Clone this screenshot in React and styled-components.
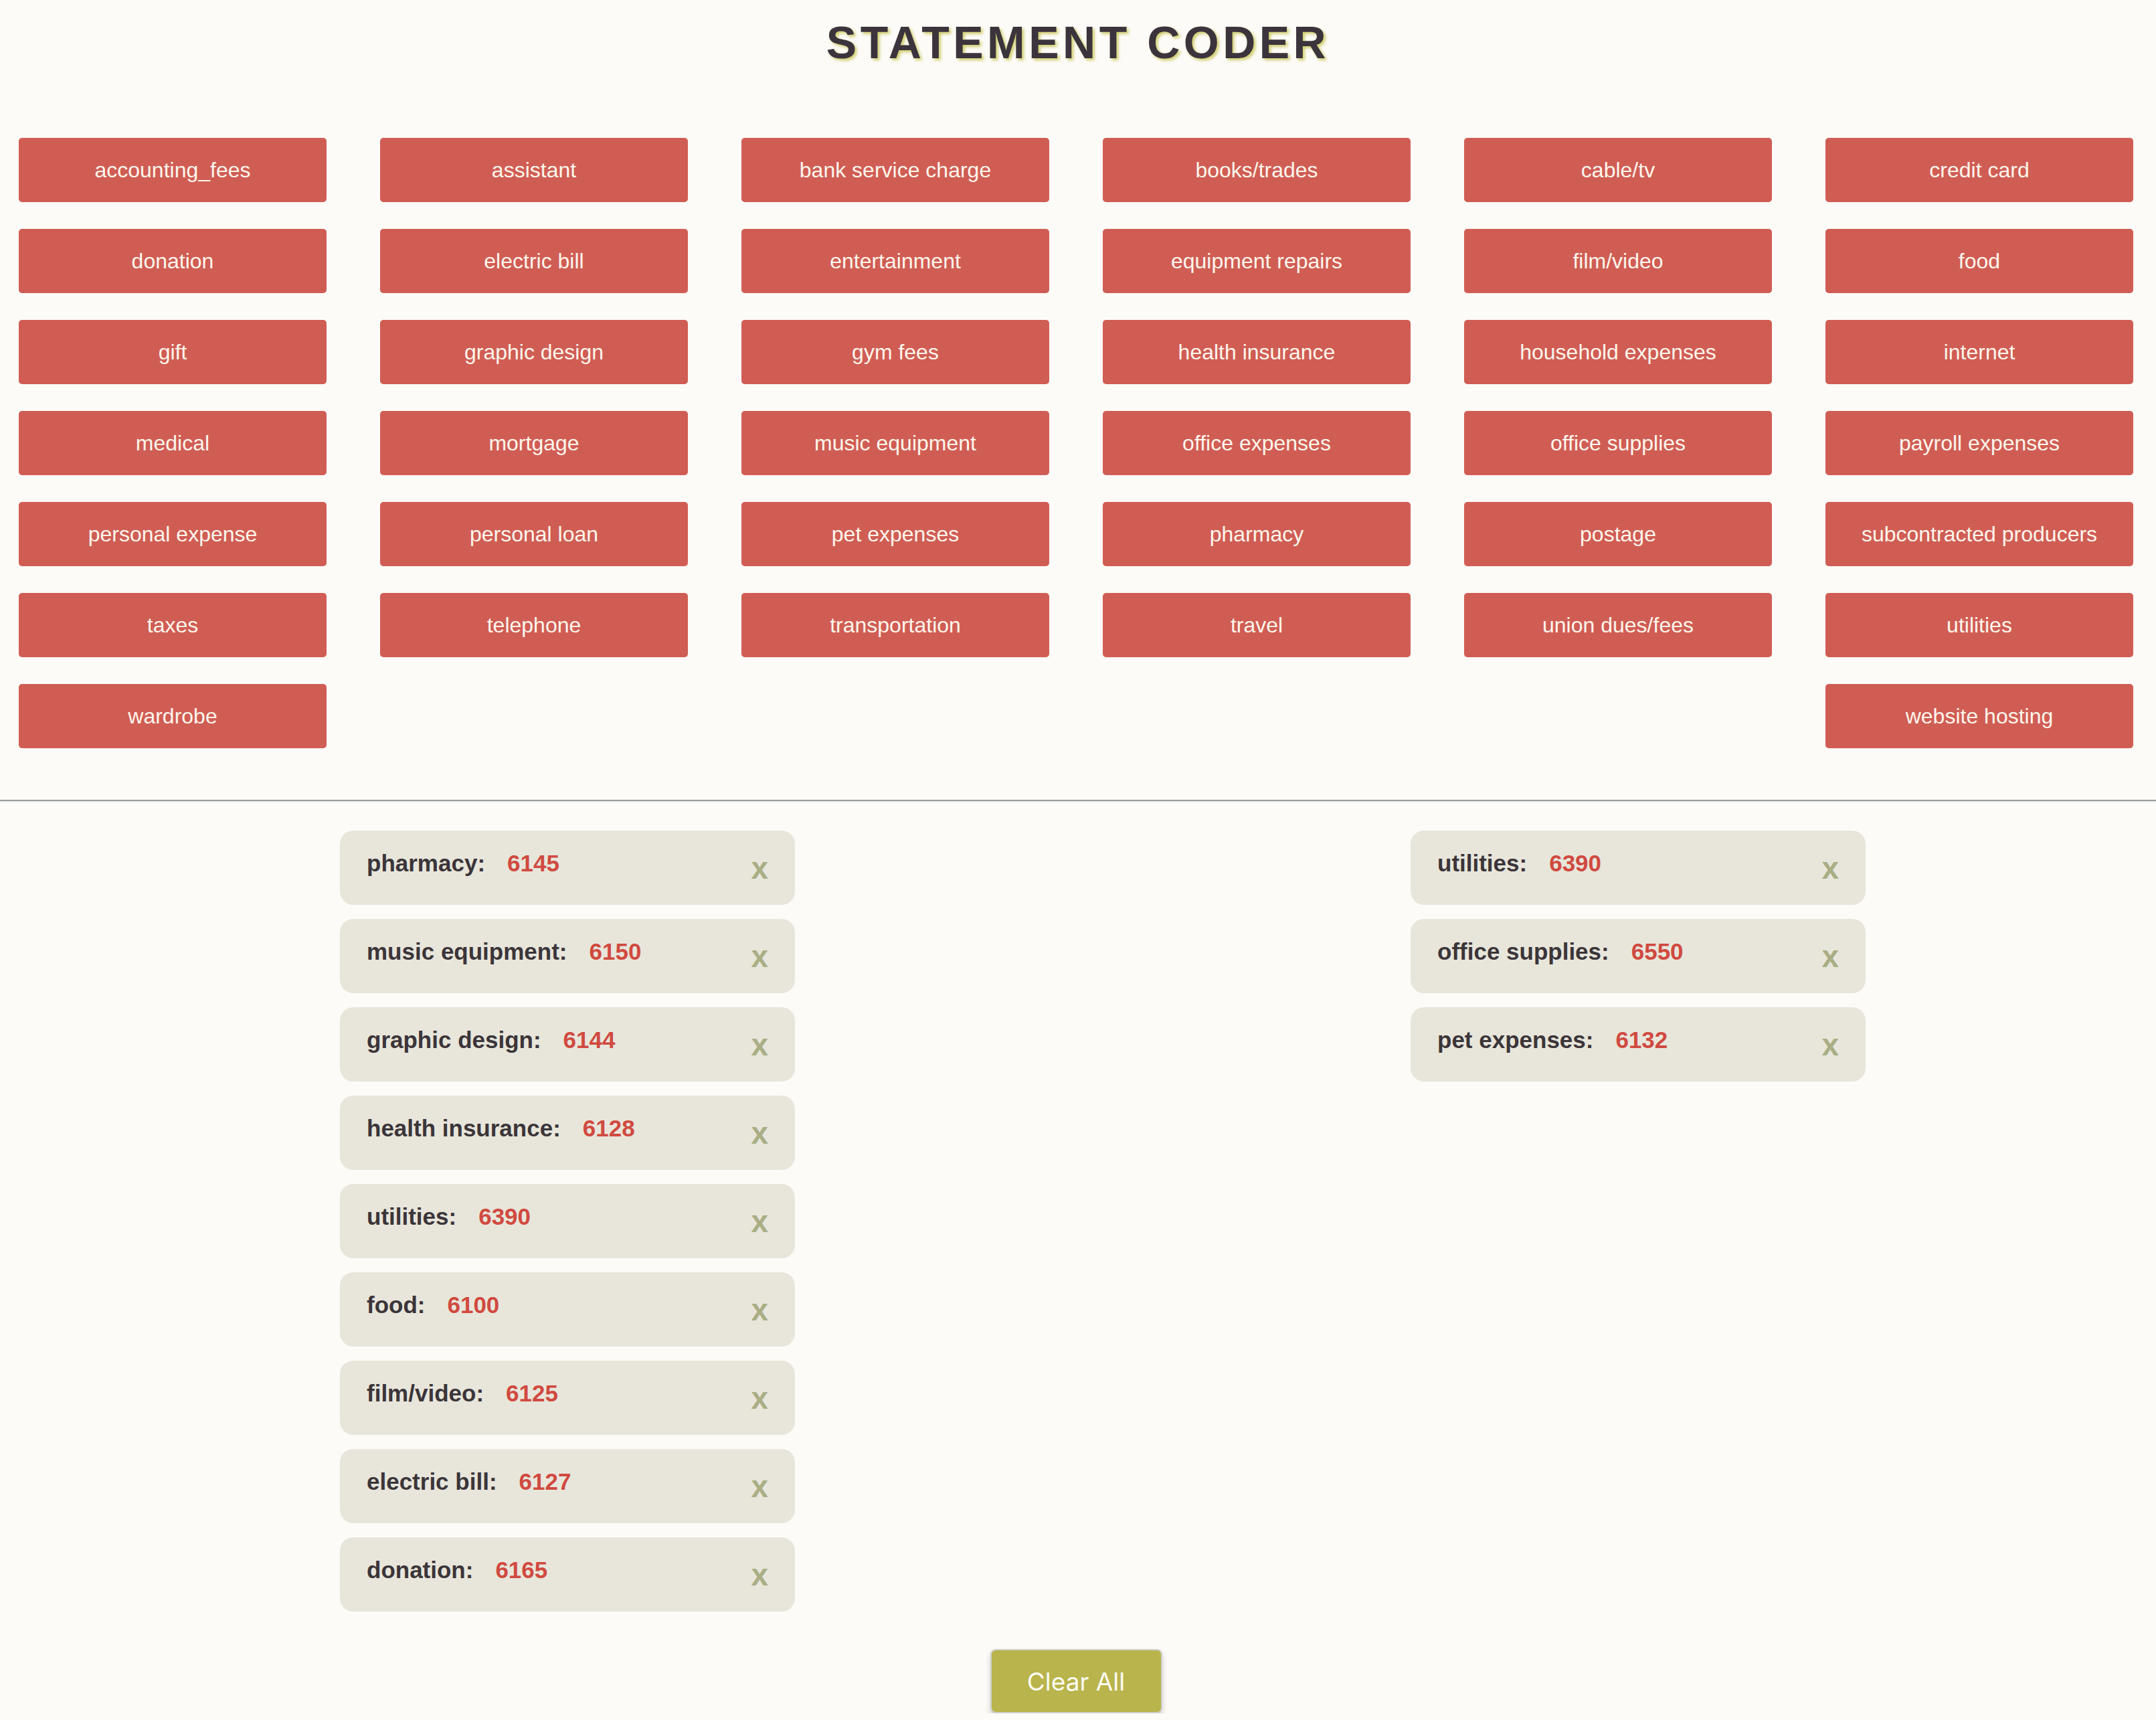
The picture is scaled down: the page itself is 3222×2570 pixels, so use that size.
import React from "react";
import styled, { createGlobalStyle } from "styled-components";

const categories = [
  "accounting_fees", "assistant", "bank service charge", "books/trades", "cable/tv", "credit card",
  "donation", "electric bill", "entertainment", "equipment repairs", "film/video", "food",
  "gift", "graphic design", "gym fees", "health insurance", "household expenses", "internet",
  "medical", "mortgage", "music equipment", "office expenses", "office supplies", "payroll expenses",
  "personal expense", "personal loan", "pet expenses", "pharmacy", "postage", "subcontracted producers",
  "taxes", "telephone", "transportation", "travel", "union dues/fees", "utilities",
  "wardrobe", "website hosting",
];

const leftList = [
  { name: "pharmacy", code: 6145 },
  { name: "music equipment", code: 6150 },
  { name: "graphic design", code: 6144 },
  { name: "health insurance", code: 6128 },
  { name: "utilities", code: 6390 },
  { name: "food", code: 6100 },
  { name: "film/video", code: 6125 },
  { name: "electric bill", code: 6127 },
  { name: "donation", code: 6165 },
];

const rightList = [
  { name: "utilities", code: 6390 },
  { name: "office supplies", code: 6550 },
  { name: "pet expenses", code: 6132 },
];

export default function App() {
  return (
    <>
      <GlobalStyle />
      <Title>STATEMENT CODER</Title>
      <CategoryGrid>
        {categories.map((cat) => (
          <CategoryButton key={cat}>{cat}</CategoryButton>
        ))}
      </CategoryGrid>
      <Divider />
      <Columns>
        {[leftList, rightList].map((list, i) => (
          <Column key={i}>
            {list.map((item, j) => (
              <Entry key={j}>
                <EntryLabel>
                  {item.name}:<Code>{item.code}</Code>
                </EntryLabel>
                <Remove>x</Remove>
              </Entry>
            ))}
          </Column>
        ))}
      </Columns>
      <Footer>
        <ClearButton>Clear All</ClearButton>
      </Footer>
    </>
  );
}

const GlobalStyle = createGlobalStyle`
  html, body {
    margin: 0;
    padding: 0;
    background: #fcfbf7;
  }
  body {
    font-family: "Liberation Sans", Arial, sans-serif;
  }
  * {
    box-sizing: border-box;
  }
`;

const Title = styled.h1`
  margin: 0;
  padding-top: 24px;
  font-family: "Liberation Sans", Arial, sans-serif;
  font-weight: bold;
  font-size: 68px;
  line-height: 78px;
  letter-spacing: 5.5px;
  text-align: center;
  color: #3b343c;
  text-shadow: 3px 3px 4px #cfcd6e;
`;

const CategoryGrid = styled.div`
  display: flex;
  flex-wrap: wrap;
  justify-content: space-between;
  row-gap: 40px;
  margin-top: 104px;
  padding: 0 34px 0 28px;
`;

const CategoryButton = styled.div`
  width: 460px;
  height: 96px;
  display: flex;
  align-items: center;
  justify-content: center;
  background: #d05d54;
  color: #fdf6ec;
  border-radius: 5px;
  font-size: 32px;
  cursor: pointer;
`;

const Divider = styled.hr`
  margin: 77px 0 0;
  border: none;
  border-top: 2px solid #9a9a9a;
  border-bottom: 2px solid #ececec;
  height: 0;
`;

const Columns = styled.div`
  display: grid;
  grid-template-columns: 680px 680px;
  column-gap: 920px;
  margin-top: 42px;
  padding-left: 508px;
  align-items: start;
`;

const Column = styled.div`
  display: flex;
  flex-direction: column;
  gap: 21px;
`;

const Entry = styled.div`
  height: 111px;
  padding: 0 40px 0 40px;
  display: flex;
  align-items: center;
  justify-content: space-between;
  background: #e8e6db;
  border-radius: 20px;
`;

const EntryLabel = styled.span`
  margin-bottom: 14px;
  font-size: 35px;
  font-weight: bold;
  color: #3b3539;
`;

const Code = styled.span`
  margin-left: 33px;
  color: #d04a40;
`;

const Remove = styled.span`
  font-size: 46px;
  font-weight: bold;
  color: #a9ae84;
  cursor: pointer;
`;

const Footer = styled.div`
  display: flex;
  justify-content: center;
  margin-top: 56px;
  padding-right: 6px;
`;

const ClearButton = styled.button`
  width: 257px;
  height: 96px;
  background: #b9b44c;
  color: #fdfbf3;
  border: 2px solid #cfcfcb;
  border-radius: 8px;
  box-shadow: 0 5px 8px rgba(0, 0, 0, 0.18);
  font-family: Inter, "Liberation Sans", sans-serif;
  font-size: 37px;
  cursor: pointer;
`;
